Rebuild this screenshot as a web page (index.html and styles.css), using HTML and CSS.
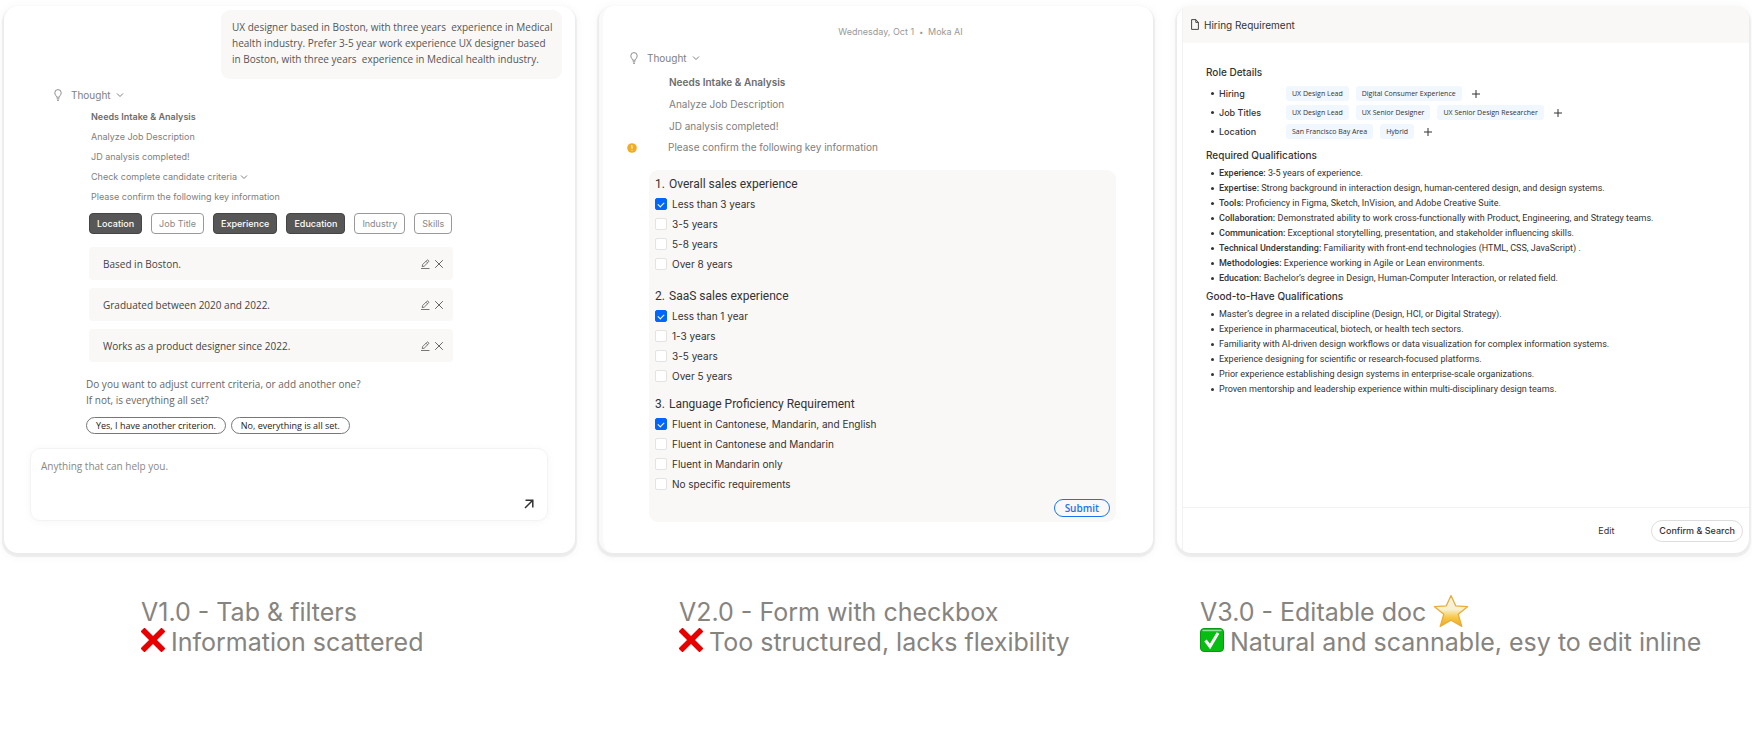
FILE: index.html
```html
<!DOCTYPE html>
<html lang="en">
<head>
<meta charset="utf-8">
<title>Design iterations</title>
<link rel="stylesheet" href="styles.css">
</head>
<body>
<svg width="0" height="0" class="sprite" aria-hidden="true">
  <symbol id="bulb" viewBox="0 0 8 12"><path d="M2.6 8.2C2.6 6.8.8 6 .8 3.8a3.2 3.2 0 0 1 6.4 0C7.200 6 5.400 6.800 5.400 8.200zM2.700 9.800h2.600M3 11.300h2" fill="none" stroke="currentColor" stroke-width=".9"/></symbol>
  <symbol id="chev" viewBox="0 0 8 6"><path d="M1 1.500l3 3 3-3" fill="none" stroke="currentColor" stroke-width="1"/></symbol>
  <symbol id="pencil" viewBox="0 0 10 10"><path d="M1 9.500h8.500M2.200 7.600l.4-2L7 1.200a.8.8 0 0 1 1.100 0l.5.5a.8.8 0 0 1 0 1.100L4.200 7.200zM6 2.200l1.600 1.600" fill="none" stroke="currentColor" stroke-width=".9"/></symbol>
  <symbol id="close" viewBox="0 0 10 10"><path d="M1.200 1.200l7.600 7.600M8.800 1.200L1.200 8.800" fill="none" stroke="currentColor" stroke-width="1"/></symbol>
  <symbol id="plus" viewBox="0 0 14 14"><path d="M7 3v8M3 7h8" fill="none" stroke="currentColor" stroke-width="1"/></symbol>
  <symbol id="cross" viewBox="0 0 24 24"><path d="M3.500 3.500l17 17M20.500 3.500l-17 17" fill="none" stroke="#e80000" stroke-width="5.600" stroke-linecap="square" stroke-linejoin="round"/></symbol>
</svg>
<main class="board">
  <section class="version version-chat">
    <div class="panel">
      <p class="bubble">UX designer based in Boston, with three years&nbsp; experience in Medical<br>health industry. Prefer 3-5 year work experience UX designer based<br>in Boston, with three years&nbsp; experience in Medical health industry.</p>
      <button class="thought"><svg class="bulb"><use href="#bulb"/></svg>Thought<svg class="chev"><use href="#chev"/></svg></button>
      <div class="steps">
        <strong>Needs Intake &amp; Analysis</strong>
        <span>Analyze Job Description</span>
        <span>JD analysis completed!</span>
        <span>Check complete candidate criteria <svg class="chev"><use href="#chev"/></svg></span>
        <span>Please confirm the following key information</span>
      </div>
      <div class="filters">
        <button class="filter on">Location</button><button class="filter">Job Title</button><button class="filter on">Experience</button><button class="filter on">Education</button><button class="filter">Industry</button><button class="filter">Skills</button>
      </div>
      <ul class="criteria">
        <li><span>Based in Boston.</span><button aria-label="Edit"><svg><use href="#pencil"/></svg></button><button aria-label="Remove"><svg><use href="#close"/></svg></button></li>
        <li><span>Graduated between 2020 and 2022.</span><button aria-label="Edit"><svg><use href="#pencil"/></svg></button><button aria-label="Remove"><svg><use href="#close"/></svg></button></li>
        <li><span>Works as a product designer since 2022.</span><button aria-label="Edit"><svg><use href="#pencil"/></svg></button><button aria-label="Remove"><svg><use href="#close"/></svg></button></li>
      </ul>
      <p class="question">Do you want to adjust current criteria, or add another one?<br>If not, is everything all set?</p>
      <div class="replies"><button>Yes, I have another criterion.</button><button>No, everything is all set.</button></div>
      <form class="composer">
        <textarea aria-label="Message" placeholder="Anything that can help you."></textarea>
        <button type="button" aria-label="Send"><svg viewBox="0 0 10 10"><path d="M1 9L8.500 1.500M1.500 1.200h7.300v7.300" fill="none" stroke="currentColor" stroke-width="1.500"/></svg></button>
      </form>
    </div>
    <h2 class="caption">V1.0 - Tab &amp; filters<br><svg class="emoji" role="img" aria-label="No"><use href="#cross"/></svg>Information scattered</h2>
  </section>

  <section class="version version-form">
    <div class="panel">
      <p class="date">Wednesday, Oct 1<span>•</span>Moka AI</p>
      <button class="thought"><svg class="bulb"><use href="#bulb"/></svg>Thought<svg class="chev"><use href="#chev"/></svg></button>
      <div class="steps">
        <strong>Needs Intake &amp; Analysis</strong>
        <span>Analyze Job Description</span>
        <span>JD analysis completed!</span>
      </div>
      <div class="notice"><svg viewBox="0 0 10 10"><circle cx="5" cy="5" r="4.800" fill="#f0ad24"/><path d="M4 3.300l1-.8v3.300M5 7v.8" fill="none" stroke="#fff" stroke-width=".9"/></svg>Please confirm the following key information</div>
      <form class="survey">
        <fieldset>
          <legend><span>1.</span>Overall sales experience</legend>
          <label><input type="checkbox" checked>Less than 3 years</label>
          <label><input type="checkbox">3-5 years</label>
          <label><input type="checkbox">5-8 years</label>
          <label><input type="checkbox">Over 8 years</label>
        </fieldset>
        <fieldset>
          <legend><span>2.</span>SaaS sales experience</legend>
          <label><input type="checkbox" checked>Less than 1 year</label>
          <label><input type="checkbox">1-3 years</label>
          <label><input type="checkbox">3-5 years</label>
          <label><input type="checkbox">Over 5 years</label>
        </fieldset>
        <fieldset>
          <legend><span>3.</span>Language Proficiency Requirement</legend>
          <label><input type="checkbox" checked>Fluent in Cantonese, Mandarin, and English</label>
          <label><input type="checkbox">Fluent in Cantonese and Mandarin</label>
          <label><input type="checkbox">Fluent in Mandarin only</label>
          <label><input type="checkbox">No specific requirements</label>
        </fieldset>
        <button type="button" class="submit">Submit</button>
      </form>
    </div>
    <h2 class="caption">V2.0 - Form with checkbox<br><svg class="emoji" role="img" aria-label="No"><use href="#cross"/></svg>Too structured, lacks flexibility</h2>
  </section>

  <section class="version version-doc">
    <div class="panel">
      <div class="sheet">
      <header class="doc-head"><svg viewBox="0 0 8 11"><path d="M.6.6h4.200l2.600 2.800v7H.6zM4.800.6v2.800h2.600" fill="none" stroke="currentColor" stroke-width=".9"/></svg>Hiring Requirement</header>
      <div class="doc">
        <h3>Role Details</h3>
        <ul class="roles">
          <li><span class="term">Hiring</span><span class="chip">UX Design Lead</span><span class="chip">Digital Consumer Experience</span><button aria-label="Add"><svg><use href="#plus"/></svg></button></li>
          <li><span class="term">Job Titles</span><span class="chip">UX Design Lead</span><span class="chip">UX Senior Designer</span><span class="chip">UX Senior Design Researcher</span><button aria-label="Add"><svg><use href="#plus"/></svg></button></li>
          <li><span class="term">Location</span><span class="chip">San Francisco Bay Area</span><span class="chip">Hybrid</span><button aria-label="Add"><svg><use href="#plus"/></svg></button></li>
        </ul>
        <h3>Required Qualifications</h3>
        <ul class="points">
          <li><b>Experience:</b> 3-5 years of experience.</li>
          <li><b>Expertise:</b> Strong background in interaction design, human-centered design, and design systems.</li>
          <li><b>Tools:</b> Proficiency in Figma, Sketch, InVision, and Adobe Creative Suite.</li>
          <li><b>Collaboration:</b> Demonstrated ability to work cross-functionally with Product, Engineering, and Strategy teams.</li>
          <li><b>Communication:</b> Exceptional storytelling, presentation, and stakeholder influencing skills.</li>
          <li><b>Technical Understanding:</b> Familiarity with front-end technologies (HTML, CSS, JavaScript) .</li>
          <li><b>Methodologies:</b> Experience working in Agile or Lean environments.</li>
          <li><b>Education:</b> Bachelor’s degree in Design, Human-Computer Interaction, or related field.</li>
        </ul>
        <h3>Good-to-Have Qualifications</h3>
        <ul class="points">
          <li>Master’s degree in a related discipline (Design, HCI, or Digital Strategy).</li>
          <li>Experience in pharmaceutical, biotech, or health tech sectors.</li>
          <li>Familiarity with AI-driven design workflows or data visualization for complex information systems.</li>
          <li>Experience designing for scientific or research-focused platforms.</li>
          <li>Prior experience establishing design systems in enterprise-scale organizations.</li>
          <li>Proven mentorship and leadership experience within multi-disciplinary design teams.</li>
        </ul>
      </div>
      <footer class="doc-foot"><button class="edit">Edit</button><button class="confirm">Confirm &amp; Search</button></footer>
      </div>
    </div>
    <h2 class="caption">V3.0 - Editable doc <svg class="star" viewBox="0 0 36 34" role="img" aria-label="Star"><defs><linearGradient id="gold" x1="0" y1="0" x2="0" y2="1"><stop offset="0" stop-color="#f4f2ea"/><stop offset=".45" stop-color="#f8f0cf"/><stop offset=".7" stop-color="#f6c94a"/><stop offset="1" stop-color="#efa51c"/></linearGradient></defs><path d="M18 1.500l4.700 10.300 11.800.9-9.300 7.500 3.600 12.300L18 26.300 7.200 32.500l3.600-12.300L1.500 12.700l11.800-.9z" fill="url(#gold)" stroke="#e9ad3c" stroke-width="1.300" stroke-linejoin="round"/></svg><br><svg class="emoji" viewBox="0 0 24 24" role="img" aria-label="Yes"><rect x=".5" y=".5" width="23" height="23" rx="3.500" fill="#07bd12" stroke="#079a10"/><path d="M3 2.500h18" stroke="#8fe394" stroke-width="1.500" stroke-linecap="round"/><path d="M5.500 12.500l4.500 6L18 5" fill="none" stroke="#fff" stroke-width="3"/></svg>Natural and scannable, esy to edit inline</h2>
  </section>
</main>
</body>
</html>
```
FILE: styles.css
```css
* { box-sizing: border-box; }
body { margin: 0; background: #fff; font-family: Inter, "Liberation Sans", sans-serif; color: #333; }
p, h2, h3, ul, fieldset { margin: 0; padding: 0; border: 0; }
ul { list-style: none; }
button { margin: 0; padding: 0; border: 0; background: none; font: inherit; color: inherit; }
svg { display: block; flex: none; }
.sprite { position: absolute; }

.board { display: grid; grid-template-columns: 571fr 554fr 572fr; gap: 24px; padding: 6px 3px 0 4px; }
.version { display: flex; flex-direction: column; min-width: 0; }
.panel { display: flex; flex-direction: column; min-height: 547px; border-radius: 14px; background: #fff; box-shadow: 0 2px 1px 2px rgba(0,0,0,.055), 0 2px 8px 3px rgba(0,0,0,.03); }

.thought { display: flex; align-items: center; gap: 9px; align-self: flex-start; font-size: 10px; color: #808080; line-height: 16px; }
.thought .chev { margin-left: -4px; }
.bulb { width: 8px; height: 12px; }
.chev { width: 8px; height: 6px; }
.steps { display: flex; flex-direction: column; color: #808080; }
.steps strong { font-weight: 600; color: #6c6c6c; }
.steps .chev { display: inline-block; }

/* Chat version */
.version-chat .panel { font-size: 9px; }
.bubble { align-self: flex-end; width: 341px; margin: 4px 13px 0 0; padding: 9px 6px 12px 11px; border-radius: 9px; background: #f9f8f7; font: 10px/16px "Open Sans", sans-serif; color: #555; }
.version-chat .thought { margin: 8px 0 0 50px; }
.version-chat .steps { margin: 4px 0 0 87px; line-height: 20px; }
.filters { display: flex; gap: 9px; margin: 6px 0 0 85px; }
.filter { height: 21px; padding: 0 7px; border: 1px solid #999; border-radius: 4px; font-size: 9px; color: #888; }
.filter.on { border-color: #444; background: #575757; color: #fff; font-weight: 500; }
.criteria { display: grid; gap: 8px; width: 364px; margin: 13px 0 0 85px; }
.criteria li { display: flex; align-items: center; gap: 4px; height: 33px; padding: 0 9px 0 14px; border-radius: 4px; background: #f9f8f7; font: 10px/16px "Open Sans", sans-serif; color: #444; }
.criteria span { flex: 1; }
.criteria button { color: #666; }
.criteria svg { width: 10px; height: 10px; }
.question { margin: 14px 0 0 82px; font: 10px/16px "Open Sans", sans-serif; color: #666; }
.replies { display: flex; gap: 5px; margin: 9px 0 0 82px; }
.replies button { height: 17px; padding: 0 9px; border: 1px solid #777; border-radius: 9px; font: 500 9px/14px "Open Sans", sans-serif; color: #222; }
.composer { display: flex; margin: 14px 27px 0 26px; height: 73px; border: 1px solid #f3f3f3; border-radius: 10px; box-shadow: 0 1px 8px rgba(0,0,0,.04); }
.composer textarea { flex: 1; margin: 0; padding: 9px 10px; border: 0; outline: 0; resize: none; background: none; font: 10px/16px "Open Sans", sans-serif; }
.composer textarea::placeholder { color: #888; }
.composer button { align-self: flex-end; padding: 0 13px 11px 0; color: #333; }
.composer button svg { width: 10px; height: 10px; }

/* Form version */
.version-form .panel { font-size: 10px; border-left: 4px solid #f9f9f9; }
.date { margin: 18px 0 0 45px; text-align: center; font-size: 9px; line-height: 16px; color: #999; }
.date span { margin: 0 5px; font-size: 7px; }
.version-form .thought { margin: 9px 0 0 27px; }
.version-form .steps { margin: 5px 0 0 66px; line-height: 22px; }
.notice { display: flex; align-items: center; gap: 31px; margin-left: 24px; line-height: 21px; color: #808080; }
.notice svg { width: 10px; height: 10px; }
.survey { display: flex; flex-direction: column; margin: 12px 37px 0 46px; padding: 4px 6px 5px; border-radius: 9px; background: #f9f8f7; }
.survey fieldset { display: flex; flex-direction: column; }
.survey fieldset:nth-of-type(1) { margin-bottom: 12px; }
.survey fieldset:nth-of-type(2) { margin-bottom: 8px; }
.survey legend { display: flex; padding: 0; font: 12px/20px Roboto, sans-serif; }
.survey legend span { width: 14px; }
.survey label { display: flex; align-items: center; gap: 5px; font-size: 10px; line-height: 20px; }
.survey input { appearance: none; display: grid; place-items: center; width: 12px; height: 12px; margin: 0; border: 1px solid #e3e3e3; border-radius: 2px; background: #fff; }
.survey input:checked { border-color: #06f; background: #06f; }
.survey input:checked::after { content: ""; width: 5px; height: 3px; border: solid #fff; border-width: 0 0 1px 1px; rotate: -45deg; }
.submit { align-self: flex-end; height: 18px; margin-top: 5px; padding: 0 10px; border: 1px solid #1a73f0; border-radius: 9px; font: 600 10px/16px "Open Sans", sans-serif; color: #1a73f0; }

/* Document version */
.version-doc .panel { padding-left: 5px; overflow: hidden; }
.sheet { flex: 1; display: flex; flex-direction: column; border-left: 1px solid #f2f2f2; }
.doc-head { display: flex; align-items: center; gap: 5px; height: 37px; padding-left: 8px; background: #f9f8f7; font-size: 10px; }
.doc-head svg { width: 8px; height: 11px; }
.doc { flex: 1; padding: 19px 24px 0 23px; font-size: 9px; }
.doc h3 { font-size: 10px; font-weight: 500; line-height: 20px; }
.roles { display: grid; gap: 4px; margin: 4px 0 6px; }
.roles li { display: flex; align-items: center; gap: 7px; }
.roles li::before, .points li::before { content: ""; flex: none; width: 3px; height: 3px; border-radius: 50%; background: #333; }
.roles li::before { margin: 0 -2px 0 5px; }
.term { width: 60px; font-weight: 500; }
.chip { padding: 0 6px; border-radius: 3px; background: #f1f7fe; font: 7px/15px "Open Sans", sans-serif; white-space: nowrap; }
.roles svg { width: 14px; height: 14px; }
.points { margin: 1px 0 0; font: 9px/15px Roboto, sans-serif; }
.points li { position: relative; padding-left: 13px; }
.points li::before { position: absolute; left: 5px; top: 6px; }
.points b { font-weight: 500; }
.doc-foot { display: flex; justify-content: flex-end; align-items: center; gap: 37px; height: 46px; padding-right: 6px; border-top: 1px solid #f2f2f2; font-size: 9px; }
.confirm { height: 22px; padding: 0 7px; border: 1px solid #ddd; border-radius: 11px; font-weight: 500; }

/* Captions */
.caption { padding-top: 44px; font-size: 25px; font-weight: 400; line-height: 30px; color: #86847f; white-space: nowrap; }
.version-chat .caption { padding-left: 137px; }
.version-form .caption { padding-left: 80px; }
.version-doc .caption { padding-left: 23px; }
.emoji { display: inline-block; width: 24px; height: 24px; margin-right: 6px; vertical-align: -1px; }
.star { display: inline-block; width: 36px; height: 34px; margin: -8px 0; vertical-align: 1px; }
```
